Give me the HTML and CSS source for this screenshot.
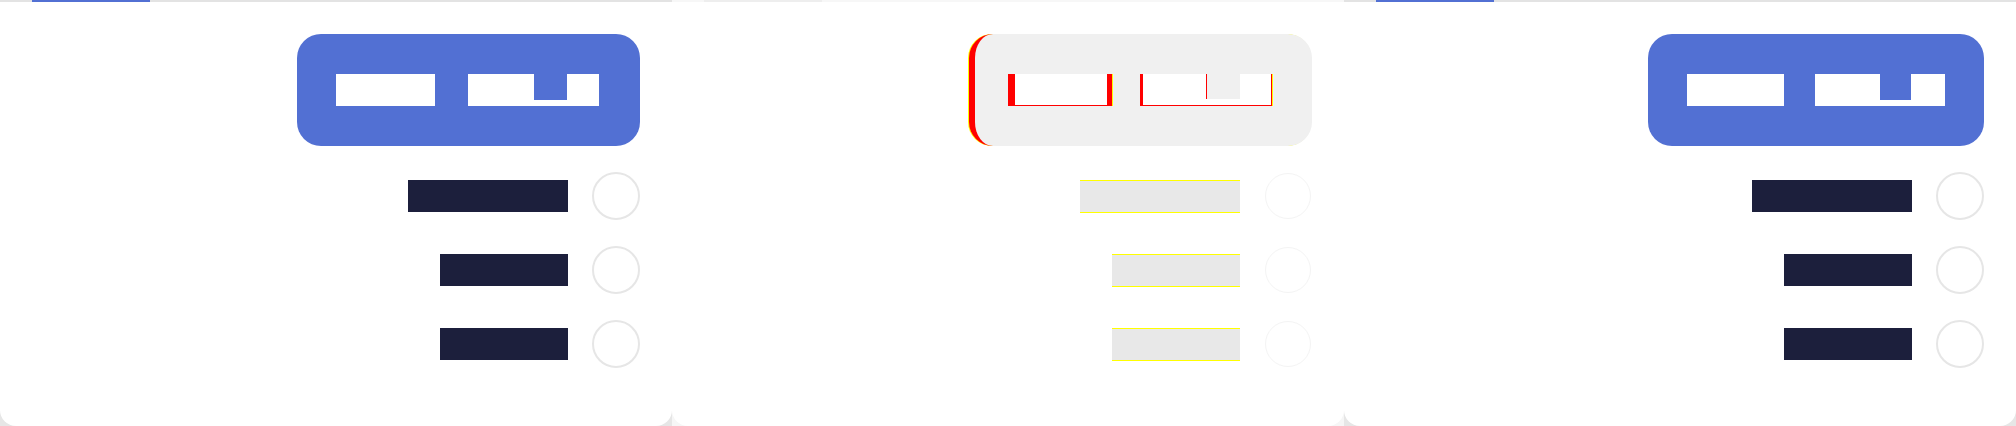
FILE: index.html
```html
<!DOCTYPE html>
<html lang="en">
<head>
<meta charset="utf-8">
<title>Cards</title>
<link rel="stylesheet" href="styles.css">
</head>
<body>
<div class="strip">
  <div class="slot">
    <section class="card">
      <div class="track"><div class="indicator"></div></div>
      <div class="content">
        <div class="btn">
          <span class="blk blk-a"></span>
          <span class="blk blk-b"><span class="notch"></span></span>
        </div>
        <div class="row"><span class="bar bar-long"></span><span class="dot"></span></div>
        <div class="row"><span class="bar"></span><span class="dot"></span></div>
        <div class="row"><span class="bar"></span><span class="dot"></span></div>
      </div>
    </section>
  </div>
  <div class="slot slot-ghost">
    <section class="card card-ghost">
      <div class="track"><div class="indicator"></div></div>
      <div class="content">
        <div class="btn">
          <span class="blk blk-a"></span>
          <span class="blk blk-b"><span class="notch"></span></span>
        </div>
        <div class="row"><span class="bar bar-long"></span><span class="dot"></span></div>
        <div class="row"><span class="bar"></span><span class="dot"></span></div>
        <div class="row"><span class="bar"></span><span class="dot"></span></div>
      </div>
    </section>
  </div>
  <div class="slot">
    <section class="card card-narrow">
      <div class="track"><div class="indicator"></div></div>
      <div class="content">
        <div class="btn">
          <span class="blk blk-a"></span>
          <span class="blk blk-b"><span class="notch"></span></span>
        </div>
        <div class="row"><span class="bar bar-long"></span><span class="dot"></span></div>
        <div class="row"><span class="bar"></span><span class="dot"></span></div>
        <div class="row"><span class="bar"></span><span class="dot"></span></div>
      </div>
    </section>
  </div>
</div>
</body>
</html>
```
FILE: styles.css
```css
html, body {
  margin: 0;
  padding: 0;
  background: #e6e6e6;
  font-family: "Liberation Sans", Arial, sans-serif;
}

.strip {
  display: flex;
  width: 2016px;
  height: 426px;
}

.slot {
  width: 672px;
  height: 426px;
  background: #e6e6e6;
}

.slot-ghost {
  background: #f6f6f6;
}

.card {
  box-sizing: border-box;
  width: 672px;
  height: 426px;
  background: #ffffff;
  border-radius: 0 0 16px 16px;
  display: flex;
  flex-direction: column;
}

.track {
  height: 2px;
  background: #e3e3e3;
  display: flex;
}

.indicator {
  margin-left: 32px;
  width: 118px;
  height: 2px;
  background: #5270d3;
}

.content {
  display: flex;
  flex-direction: column;
  align-items: flex-end;
  gap: 26px;
  padding: 32px 32px 0 0;
}

.btn {
  box-sizing: border-box;
  width: 343px;
  height: 112px;
  border-radius: 24px;
  background: #5270d3;
  display: flex;
  align-items: center;
  padding: 0 41px 0 39px;
  gap: 33px;
}

.blk {
  box-sizing: border-box;
  height: 32px;
  background: #ffffff;
  display: flex;
  align-items: flex-start;
}

.blk-a {
  width: 99px;
}

.blk-b {
  width: 131px;
}

.notch {
  margin-left: 66px;
  width: 33px;
  height: 26px;
  background: #5270d3;
}

.row {
  display: flex;
  align-items: center;
  gap: 24px;
}

.bar {
  box-sizing: border-box;
  width: 128px;
  height: 32px;
  background: #1c1f3c;
}

.bar-long {
  width: 160px;
}

.dot {
  box-sizing: border-box;
  width: 48px;
  height: 48px;
  border-radius: 50%;
  border: 2px solid #e6e6e6;
  background: #ffffff;
}

/* narrower label in third card */
.card-narrow .btn {
  width: 336px;
  padding: 0 39px;
  gap: 31px;
}

.card-narrow .blk-a {
  width: 97px;
}

.card-narrow .blk-b {
  width: 130px;
}

.card-narrow .notch {
  margin-left: 65px;
  width: 31px;
  height: 26px;
}

/* faded / highlighted middle card */
.card-ghost .track {
  background: #f7f7f7;
}

.card-ghost .indicator {
  background: #eeeeee;
}

.card-ghost .btn {
  background: #f0f0f0;
  border-left: 6px solid #ff0000;
  box-shadow: -1px 0 0 #ffff00;
  padding: 0 40px 0 33px;
  gap: 28px;
}

.card-ghost .blk-a {
  width: 104px;
  border-left: 7px solid #ff0000;
  border-right: 5px solid #ff0000;
  border-bottom: 1px solid #ff0000;
  box-shadow: 1px 0 0 #ffff00;
}

.card-ghost .blk-b {
  width: 132px;
  border-left: 3px solid #ff0000;
  border-right: 1px solid #ff0000;
  border-bottom: 1px solid #ff0000;
  box-shadow: 1px 0 0 #ffff00;
}

.card-ghost .notch {
  margin-left: 63px;
  width: 33px;
  height: 25px;
  background: #f0f0f0;
  border-left: 1px solid #ff0000;
}

.card-ghost .bar {
  height: 33px;
  background: #e8e8e8;
  border-top: 1px solid #ffff00;
  border-bottom: 1px solid #ffff00;
}

.card-ghost .row {
  gap: 25px;
}

.card-ghost .dot {
  border: 1px solid #f4f4f4;
  width: 46px;
  height: 46px;
  margin: 1px 1px 1px 0;
}
```
